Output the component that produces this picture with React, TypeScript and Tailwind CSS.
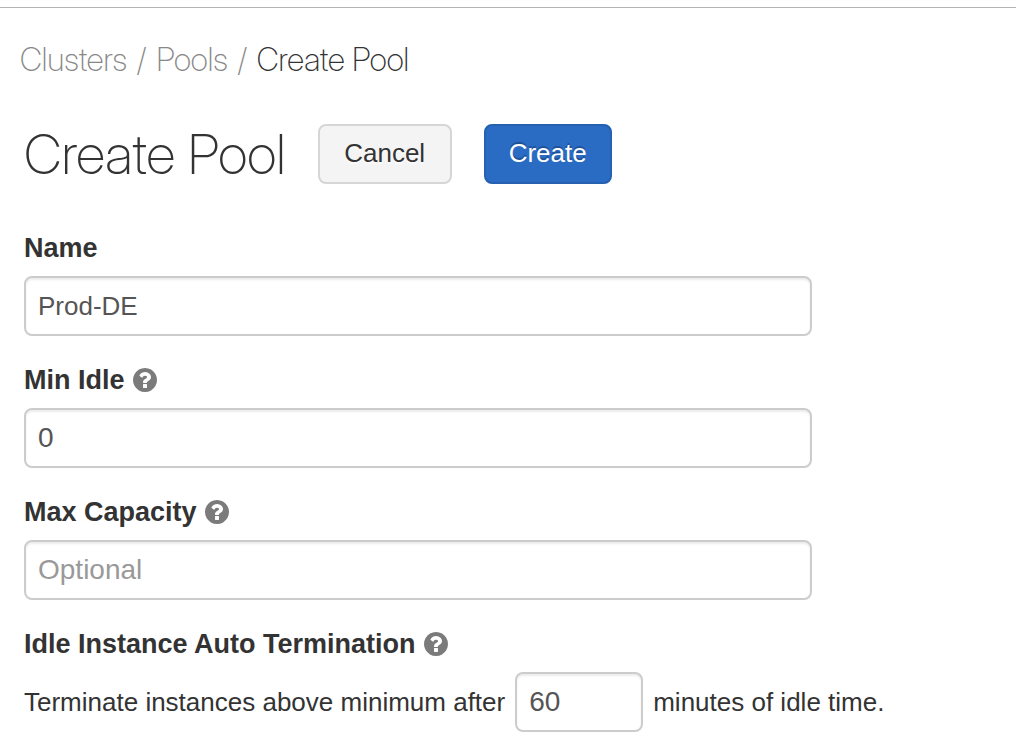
import type { InputHTMLAttributes, ReactNode } from "react";

function HelpIcon() {
  return (
    <svg viewBox="128 128 1536 1536" className="size-6 shrink-0 fill-[#7b7b7b]" aria-hidden="true">
      <path d="M1024 1376v-192q0-14-9-23t-23-9h-192q-14 0-23 9t-9 23v192q0 14 9 23t23 9h192q14 0 23-9t9-23zm256-672q0-88-55.5-163t-138.5-116-170-41q-243 0-371 213-15 24 8 42l132 100q7 6 19 6 16 0 25-12 53-68 86-92 34-24 86-24 48 0 85.500 26t37.500 59q0 38-20 61t-68 45q-63 28-115.500 86.500t-52.500 125.500v36q0 14 9 23t23 9h192q14 0 23-9t9-23q0-19 21.500-49.500t54.500-49.500q32-18 49-28.500t46-35 44.500-48 28-60.500 12.500-81zm384 192q0 209-103 385.500t-279.500 279.500-385.500 103-385.500-103-279.500-279.500-103-385.500 103-385.500 279.500-279.500 385.500-103 385.500 103 279.500 279.500 103 385.500z" />
    </svg>
  );
}

const inputStyle =
  "h-[60px] rounded-lg border-2 border-[#cccccc] bg-white px-3 text-[#555555] shadow-[inset_0_2px_2px_rgba(0,0,0,0.075)] outline-none placeholder:text-[#999999] focus:border-[#2a6bc4]";

const buttonStyle = "h-[60px] rounded-lg border-2 pb-0.5 text-center text-[26px]";

function FieldLabel({ htmlFor, help, children }: { htmlFor: string; help?: boolean; children: ReactNode }) {
  return (
    <div className="flex h-10 items-center gap-2">
      <label htmlFor={htmlFor} className="text-[27px] leading-10 font-bold">
        {children}
      </label>
      {help && <HelpIcon />}
    </div>
  );
}

type FieldProps = InputHTMLAttributes<HTMLInputElement> & { id: string; label: string; help?: boolean };

function Field({ id, label, help, className = "text-[28px]", ...input }: FieldProps) {
  return (
    <div className="flex flex-col gap-2">
      <FieldLabel htmlFor={id} help={help}>
        {label}
      </FieldLabel>
      <input id={id} type="text" className={`w-full ${inputStyle} ${className}`} {...input} />
    </div>
  );
}

export default function App() {
  return (
    <div className="min-h-screen bg-white pt-[7px] font-['Liberation_Sans',Arial,sans-serif] text-[#333333]">
      <main className="border-t border-[#b3b3b3] px-6 pt-8">
        <nav
          aria-label="Breadcrumb"
          className="-ml-1 flex gap-2.5 font-['Inter_Display','Inter',sans-serif] text-[32px] leading-10 font-extralight"
        >
          <a href="#clusters" className="text-[#888888]">Clusters</a>
          <span className="text-[#888888]">/</span>
          <a href="#pools" className="text-[#888888]">Pools</a>
          <span className="text-[#888888]">/</span>
          <span aria-current="page">Create Pool</span>
        </nav>

        <form onSubmit={(e) => e.preventDefault()}>
          <header className="mt-11 flex items-center gap-8">
            <h1 className="font-['Inter_Display','Inter',sans-serif] text-[55px] leading-[60px] font-extralight">
              Create Pool
            </h1>
            <button
              type="button"
              className={`w-[134px] border-[#d6d6d6] bg-[#f4f4f4] text-[#333333] text-shadow-[0_2px_2px_rgba(255,255,255,0.75)] ${buttonStyle}`}
            >
              Cancel
            </button>
            <button
              type="submit"
              className={`w-32 border-[#2660b0] bg-[#2a6bc4] text-white text-shadow-[0_-2px_0_rgba(0,0,0,0.25)] ${buttonStyle}`}
            >
              Create
            </button>
          </header>

          <div className="mt-11 flex max-w-[788px] flex-col gap-6">
            <Field id="name" label="Name" defaultValue="Prod-DE" className="text-[26px]" />
            <Field id="min-idle" label="Min Idle" help defaultValue="0" />
            <Field id="max-capacity" label="Max Capacity" help placeholder="Optional" />
          </div>

          <div className="mt-6 flex flex-col gap-2">
            <FieldLabel htmlFor="idle-minutes" help>
              Idle Instance Auto Termination
            </FieldLabel>
            <div className="flex items-center gap-2.5 text-[26px]">
              <span>Terminate instances above minimum after</span>
              <input id="idle-minutes" type="text" defaultValue="60" className={`w-32 text-[28px] ${inputStyle}`} />
              <span>minutes of idle time.</span>
            </div>
          </div>
        </form>
      </main>
    </div>
  );
}
